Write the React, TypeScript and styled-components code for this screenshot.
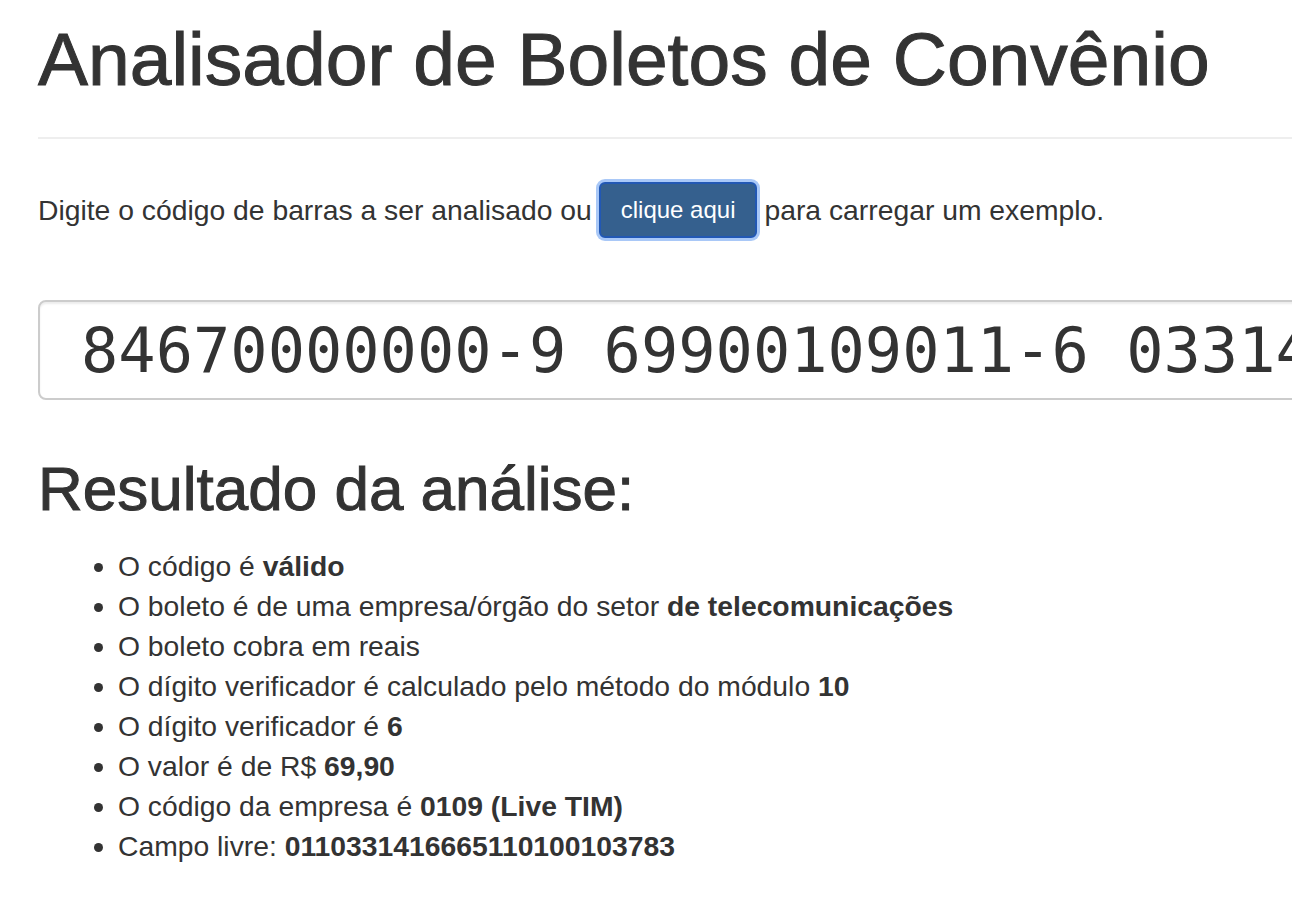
import React from "react";
import styled, { createGlobalStyle } from "styled-components";

const Global = createGlobalStyle`
  html, body {
    margin: 0;
    padding: 0;
    background: #ffffff;
    overflow: hidden;
  }
  body {
    font-family: "Liberation Sans", Arial, Helvetica, sans-serif;
    color: #333333;
  }
`;

const Page = styled.div`
  width: 1292px;
  height: 900px;
  overflow: hidden;
`;

const Container = styled.div`
  width: 2400px;
  padding: 0 0 0 38px;
`;

const Header = styled.div`
  margin-top: 18px;
  padding-bottom: 37px;
  border-bottom: 2px solid #eeeeee;
`;

const Title = styled.h1`
  margin: 0;
  font-size: 75px;
  line-height: 82px;
  font-weight: 400;
  -webkit-text-stroke: 1px #333333;
  color: #333333;
`;

const Intro = styled.p`
  margin: 40px 0 0;
  display: flex;
  align-items: center;
  gap: 7px;
  height: 62px;
  font-size: 28.3px;
  line-height: 40px;
`;

const Button = styled.button`
  height: 56px;
  margin: 0;
  padding: 0 20px;
  font-family: "Liberation Sans", Arial, Helvetica, sans-serif;
  font-size: 24px;
  color: #ffffff;
  background: #35608e;
  border: 2px solid #2258b4;
  border-radius: 6px;
  box-shadow: 0 0 0 3px #a9c8f7;
  cursor: pointer;
  outline: none;
`;

const CodeInput = styled.input`
  display: block;
  box-sizing: border-box;
  margin-top: 59px;
  width: 2300px;
  height: 100px;
  padding: 0 41px;
  font-family: "DejaVu Sans Mono", "Liberation Mono", monospace;
  font-size: 62px;
  color: #333333;
  background: #ffffff;
  border: 2px solid #cccccc;
  border-radius: 8px;
  box-shadow: inset 0 2px 2px rgba(0, 0, 0, 0.075);
  outline: none;
`;

const SubTitle = styled.h2`
  margin: 55px 0 0;
  font-size: 62px;
  line-height: 68px;
  font-weight: 400;
  -webkit-text-stroke: 1px #333333;
  color: #333333;
`;

const List = styled.ul`
  margin: 23px 0 0;
  padding-left: 80px;
  font-size: 28.3px;
  line-height: 40px;
`;

const Item = styled.li``;

const Strong = styled.b`
  font-weight: 700;
`;

const items: [string, string][] = [
  ["O código é ", "válido"],
  ["O boleto é de uma empresa/órgão do setor ", "de telecomunicações"],
  ["O boleto cobra em reais", ""],
  ["O dígito verificador é calculado pelo método do módulo ", "10"],
  ["O dígito verificador é ", "6"],
  ["O valor é de R$ ", "69,90"],
  ["O código da empresa é ", "0109 (Live TIM)"],
  ["Campo livre: ", "0110331416665110100103783"],
];

export default function App() {
  return (
    <Page>
      <Global />
      <Container>
        <Header>
          <Title>Analisador de Boletos de Convênio</Title>
        </Header>
        <Intro>
          <span>Digite o código de barras a ser analisado ou</span>
          <Button type="button">clique aqui</Button>
          <span>para carregar um exemplo.</span>
        </Intro>
        <CodeInput
          readOnly
          value="84670000000-9 69900109011-6 03314166651-2 10100103783-3"
        />
        <SubTitle>Resultado da análise:</SubTitle>
        <List>
          {items.map(([text, bold], i) => (
            <Item key={i}>
              {text}
              {bold && <Strong>{bold}</Strong>}
            </Item>
          ))}
        </List>
      </Container>
    </Page>
  );
}
